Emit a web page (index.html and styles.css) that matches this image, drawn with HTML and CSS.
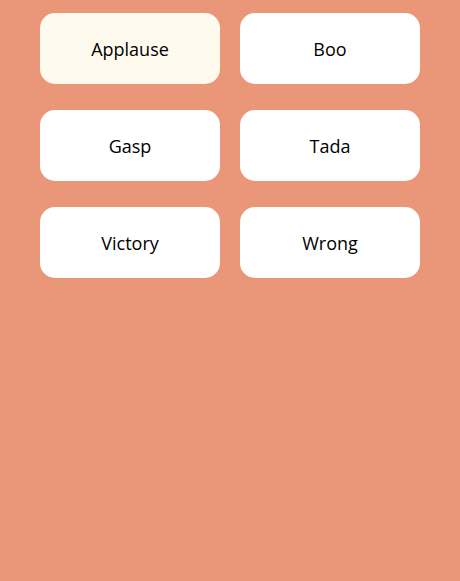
FILE: index.html
```html
<!DOCTYPE html>
<html>
<head>
<meta charset="utf-8">
<link rel="stylesheet" href="styles.css">
</head>
<body>
<div class="grid">
  <button class="pad active">Applause</button>
  <button class="pad">Boo</button>
  <button class="pad">Gasp</button>
  <button class="pad">Tada</button>
  <button class="pad">Victory</button>
  <button class="pad">Wrong</button>
</div>
</body>
</html>
```
FILE: styles.css
```css
html, body {
  margin: 0;
  padding: 0;
  background: #ea9679;
  height: 100%;
}
.grid {
  display: grid;
  grid-template-columns: 180px 180px;
  grid-auto-rows: 71px;
  column-gap: 20px;
  row-gap: 26px;
  padding: 13px 40px 0;
}
.pad {
  border: none;
  border-radius: 15px;
  background: #ffffff;
  font-family: "Open Sans", "Noto Sans", sans-serif;
  font-size: 18px;
  color: #000;
  padding: 0;
  margin: 0;
}
.pad.active {
  background: #fffaee;
}
```
